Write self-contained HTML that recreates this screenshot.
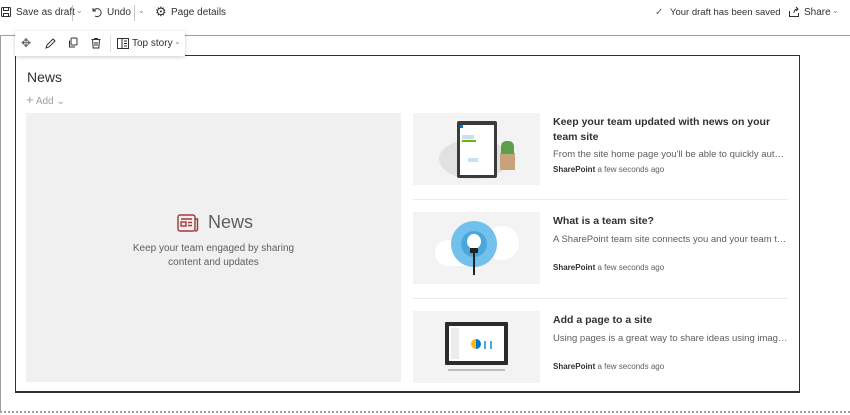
<!DOCTYPE html>
<html><head><meta charset="utf-8"><style>
*{margin:0;padding:0;box-sizing:border-box}
body{width:850px;height:415px;background:#fff;font-family:"Liberation Sans",sans-serif;color:#323130;position:relative;overflow:hidden}
.a{position:absolute}
.t{font-size:10px;color:#323130;white-space:nowrap}
.img{position:absolute;left:413px;width:127px;height:72px;background:#f3f3f3;overflow:hidden}
.tt{position:absolute;left:553px;font-size:10.5px;font-weight:bold;color:#323130;line-height:15px;width:240px}
.ds{position:absolute;left:553px;font-size:9.5px;color:#605e5c;white-space:nowrap;width:235px;overflow:hidden;text-overflow:ellipsis}
.mt{position:absolute;left:553px;font-size:8px;color:#605e5c;white-space:nowrap}
.mt b{color:#323130}
.sep{position:absolute;left:413px;width:375px;height:1px;background:#edebe9}
</style></head><body>
<!-- top bar -->
<svg class="a" style="left:0;top:6px" width="12" height="12" viewBox="0 0 12 12" fill="none" stroke="#323130" stroke-width="1"><rect x="1.5" y="1.5" width="9" height="9" rx="1"/><path d="M3.5 1.5v3h5v-3M3.5 10.5v-3h5v3"/></svg>
<div class="a t" style="left:16px;top:7px">Save as draft</div>
<div class="a" style="left:72px;top:5px;width:1px;height:16px;background:#c8c6c4"></div>
<div class="a t" style="left:76px;top:6px;font-size:8px;color:#8a8886">&#8964;</div>
<svg class="a" style="left:91px;top:6px" width="12" height="12" viewBox="0 0 12 12" fill="none" stroke="#323130" stroke-width="1"><path d="M2 2v3h3M2.5 5A4 4 0 1 1 4 10"/></svg>
<div class="a t" style="left:107px;top:7px">Undo</div>
<div class="a" style="left:134px;top:5px;width:1px;height:16px;background:#c8c6c4"></div>
<div class="a t" style="left:138px;top:6px;font-size:8px;color:#8a8886">&#8964;</div>
<div class="a t" style="left:155px;top:4px;font-size:13px">&#9881;</div>
<div class="a t" style="left:171px;top:7px">Page details</div>
<div class="a t" style="left:655px;top:7px;color:#605e5c">&#10003;</div>
<div class="a t" style="left:670px;top:7px;font-size:9.5px">Your draft has been saved</div>
<svg class="a" style="left:788px;top:6px" width="12" height="12" viewBox="0 0 12 12" fill="none" stroke="#323130" stroke-width="1"><path d="M1.5 5v5.5h9V7M6 7c0-3 2-4 4-4M8 1l2 2-2 2"/></svg>
<div class="a t" style="left:804px;top:7px">Share</div>
<div class="a t" style="left:832px;top:6px;font-size:8px;color:#8a8886">&#8964;</div>
<!-- section frame -->
<div class="a" style="left:0;top:35px;width:850px;height:1px;background:#a19f9d"></div>
<div class="a" style="left:0;top:35px;width:1px;height:378px;background:#a19f9d"></div>
<div class="a" style="left:0;top:411px;width:850px;height:2px;border-top:2px dotted #a19f9d"></div>
<!-- inner box -->
<div class="a" style="left:15px;top:55px;width:785px;height:338px;border:1px solid #323130;border-bottom:2px solid #323130"></div>
<!-- toolbar -->
<div class="a" style="left:15px;top:31px;width:170px;height:25px;background:#fff;box-shadow:0 1px 4px rgba(0,0,0,.2)"></div>
<div class="a t" style="left:21px;top:36px;font-size:12px;color:#605e5c">&#10021;</div>
<svg class="a" style="left:44px;top:38px" width="12" height="12" viewBox="0 0 12 12" fill="none" stroke="#323130"><path d="M2 10l1-3 6-6 2 2-6 6z"/></svg>
<svg class="a" style="left:67px;top:37px" width="12" height="12" viewBox="0 0 12 12" fill="none" stroke="#323130"><rect x="4" y="1" width="6" height="7" rx="1"/><path d="M2.5 3.5v6.5h5.5"/></svg>
<svg class="a" style="left:90px;top:37px" width="12" height="12" viewBox="0 0 12 12" fill="none" stroke="#323130"><path d="M1.5 2.5h9M4.5 2.5v-1h3v1M2.5 2.5l.7 8.5h5.6l.7-8.5M5 5v4M7 5v4"/></svg>
<div class="a" style="left:110px;top:35px;width:1px;height:17px;background:#e1dfdd"></div>
<svg class="a" style="left:117px;top:38px" width="12" height="11" viewBox="0 0 12 11" fill="none" stroke="#323130"><rect x=".5" y=".5" width="11" height="10"/><path d="M5 .5v10M7 3h3M7 5.5h3M7 8h3"/></svg>
<div class="a t" style="left:132px;top:38px;font-size:10px">Top story</div>
<div class="a t" style="left:174px;top:37px;font-size:8px;color:#8a8886">&#8964;</div>
<!-- title -->
<div class="a" style="left:27px;top:69px;font-size:14px;color:#323130">News</div>
<div class="a" style="left:26px;top:92px;font-size:10px;color:#a19f9d"><span style="font-size:13px">+</span> Add &#8964;</div>
<!-- hero -->
<div class="a" style="left:26px;top:113px;width:375px;height:269px;background:#f0f0f0"></div>
<svg class="a" style="left:177px;top:214px" width="22" height="18" viewBox="0 0 22 18" fill="none" stroke="#a4373a" stroke-width="1.4"><rect x="1" y="1" width="17" height="16" rx="2"/><path d="M18 5h2.5v10a2 2 0 0 1-2.5 2"/><rect x="4" y="8" width="5" height="4"/><path d="M4 5h11M11 8.5h4M11 11.5h4"/></svg>
<div class="a" style="left:208px;top:212px;font-size:18px;color:#605e5c">News</div>
<div class="a" style="left:126px;top:242px;width:175px;text-align:center;font-size:10px;line-height:14px;color:#605e5c">Keep your team engaged by sharing content and updates</div>
<!-- card 1 -->
<div class="img" style="top:113px">
<div class="a" style="left:26px;top:26px;width:70px;height:40px;border-radius:50%;background:#e1e1e1"></div>
<div class="a" style="left:44px;top:8px;width:40px;height:57px;background:#3b3b3b;border-radius:2px"></div>
<div class="a" style="left:47px;top:12px;width:34px;height:50px;background:#fff"></div>
<div class="a" style="left:47px;top:12px;width:3px;height:3px;background:#0078d4"></div>
<div class="a" style="left:49px;top:27px;width:14px;height:2px;background:#6bb700"></div>
<div class="a" style="left:49px;top:22px;width:12px;height:4px;background:#c7e0f4"></div>
<div class="a" style="left:55px;top:45px;width:10px;height:4px;background:#c7e0f4"></div>
<div class="a" style="left:87px;top:40px;width:15px;height:17px;background:#c8a27a"></div>
<div class="a" style="left:88px;top:28px;width:13px;height:13px;background:#5c9e4a;border-radius:40% 40% 10% 10%"></div>
</div>
<div class="tt" style="top:115px">Keep your team updated with news on your team site</div>
<div class="ds" style="top:149px">From the site home page you'll be able to quickly author a news post</div>
<div class="mt" style="top:165px"><b>SharePoint</b> a few seconds ago</div>
<div class="sep" style="top:199px"></div>
<!-- card 2 -->
<div class="img" style="top:212px">
<div class="a" style="left:22px;top:28px;width:40px;height:26px;border-radius:13px;background:#fff"></div>
<div class="a" style="left:72px;top:14px;width:34px;height:34px;border-radius:50%;background:#fff"></div>
<div class="a" style="left:38px;top:9px;width:46px;height:46px;border-radius:50%;background:#71c1ec"></div>
<div class="a" style="left:48px;top:19px;width:26px;height:26px;border-radius:50%;background:#4aa7dc"></div>
<div class="a" style="left:54px;top:22px;width:14px;height:15px;border-radius:50%;background:#fff"></div>
<div class="a" style="left:57px;top:36px;width:8px;height:5px;background:#222"></div>
<div class="a" style="left:60px;top:41px;width:2px;height:22px;background:#222"></div>
</div>
<div class="tt" style="top:214px">What is a team site?</div>
<div class="ds" style="top:234px">A SharePoint team site connects you and your team to the content</div>
<div class="mt" style="top:263px"><b>SharePoint</b> a few seconds ago</div>
<div class="sep" style="top:298px"></div>
<!-- card 3 -->
<div class="img" style="top:311px">
<div class="a" style="left:32px;top:11px;width:63px;height:43px;background:#2b2b2b;border-radius:1px"></div>
<div class="a" style="left:36px;top:15px;width:55px;height:35px;background:#fff"></div>
<div class="a" style="left:38px;top:17px;width:8px;height:31px;background:#ececec"></div>
<div class="a" style="left:58px;top:28px;width:10px;height:10px;border-radius:50%;background:#ffb900;border-right:5px solid #0078d4"></div>
<div class="a" style="left:71px;top:30px;width:8px;height:8px;border-right:2px solid #4aa7dc;border-left:2px solid #4aa7dc"></div>
<div class="a" style="left:35px;top:58px;width:57px;height:2px;background:#bdbdbd"></div>
</div>
<div class="tt" style="top:313px">Add a page to a site</div>
<div class="ds" style="top:333px">Using pages is a great way to share ideas using images, text</div>
<div class="mt" style="top:362px"><b>SharePoint</b> a few seconds ago</div>
</body></html>
